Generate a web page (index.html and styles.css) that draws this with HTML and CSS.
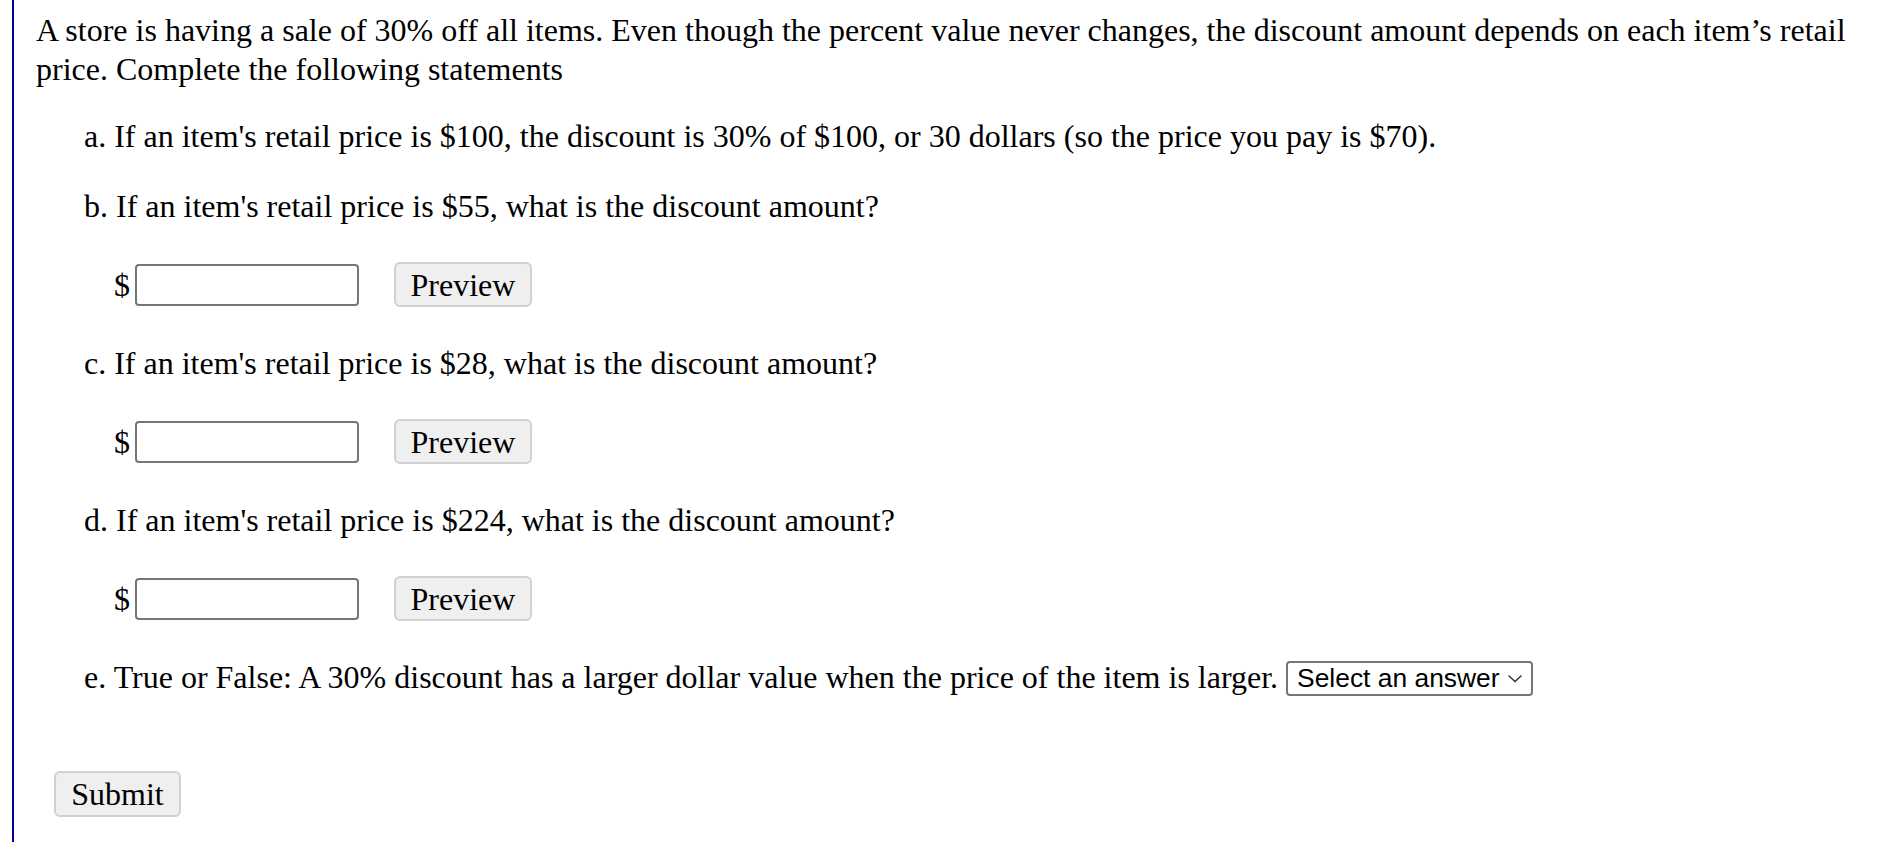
FILE: index.html
```html
<!DOCTYPE html>
<html>
<head>
<meta charset="utf-8">
<link rel="stylesheet" href="styles.css">
</head>
<body>
<div class="question">
  <p class="intro">A store is having a sale of 30% off all items. Even though the percent value never changes, the discount amount depends on each item’s retail price. Complete the following statements</p>
  <div class="parts">
    <p class="part part-a">a. If an item's retail price is $100, the discount is 30% of $100, or 30 dollars (so the price you pay is $70).</p>
    <p class="part part-first">b. If an item's retail price is $55, what is the discount amount?</p>
    <div class="answer-row"><span class="dollar">$</span><input class="answer" type="text"><button class="btn preview">Preview</button></div>
    <p class="part">c. If an item's retail price is $28, what is the discount amount?</p>
    <div class="answer-row"><span class="dollar">$</span><input class="answer" type="text"><button class="btn preview">Preview</button></div>
    <p class="part">d. If an item's retail price is $224, what is the discount amount?</p>
    <div class="answer-row"><span class="dollar">$</span><input class="answer" type="text"><button class="btn preview">Preview</button></div>
    <p class="part">e. True or False: A 30% discount has a larger dollar value when the price of the item is larger. <span class="select-wrap"><select class="choice"><option>Select an answer</option><option>True</option><option>False</option></select><svg class="chev" width="16" height="9" viewBox="0 0 16 9"><path d="M1.5 1.5 L8 7.5 L14.5 1.5" fill="none" stroke="#333" stroke-width="1.4"/></svg></span></p>
  </div>
  <button class="btn submit">Submit</button>
</div>
</body>
</html>
```
FILE: styles.css
```css
html, body {
  margin: 0;
  padding: 0;
  background: #ffffff;
}
.question {
  margin-left: 12px;
  border-left: 2px solid #00008b;
  padding: 11px 0 0 22px;
  min-height: 842px;
  box-sizing: border-box;
  font-family: "Liberation Serif", "Times New Roman", serif;
  font-size: 32px;
  line-height: 38px;
  color: #000;
}
.intro {
  margin: 0;
  line-height: 39px;
}
.parts {
  margin-left: 48px;
  margin-top: 28px;
  display: flex;
  flex-direction: column;
}
.part {
  margin: 37px 0 0 0;
  height: 38px;
  white-space: nowrap;
}
.part-a {
  margin-top: 0;
}
.part-first {
  margin-top: 32px;
}
.answer-row {
  margin-top: 37px;
  margin-left: 30px;
  height: 45px;
  display: flex;
  align-items: center;
}
.dollar {
  display: inline-block;
  width: 21px;
}
.answer {
  width: 224px;
  height: 42px;
  box-sizing: border-box;
  border: 2px solid #767676;
  border-radius: 4px;
  margin: 0;
  padding: 0 4px;
  font: inherit;
  background: #fff;
}
.btn {
  box-sizing: border-box;
  height: 45px;
  background: #efefef;
  border: 2px solid #d0d0d0;
  border-radius: 6px;
  font-family: "Liberation Serif", "Times New Roman", serif;
  font-size: 32px;
  line-height: 38px;
  color: #000;
  padding: 0;
  margin: 0;
}
.preview {
  width: 138px;
  margin-left: 35px;
}
.submit {
  width: 127px;
  height: 46px;
  margin-top: 75px;
  margin-left: 18px;
}
.select-wrap {
  position: relative;
  display: inline-block;
  vertical-align: top;
  margin-top: 3px;
}
.choice {
  -webkit-appearance: none;
  appearance: none;
  box-sizing: border-box;
  width: 247px;
  height: 35px;
  border: 2px solid #767676;
  border-radius: 4px;
  background: #fff;
  font-family: "Liberation Sans", Arial, sans-serif;
  font-size: 26.4px;
  line-height: 31px;
  color: #000;
  padding: 0 0 0 9px;
  margin: 0;
  display: block;
}
.chev {
  position: absolute;
  right: 10px;
  top: 13px;
  pointer-events: none;
}
```
